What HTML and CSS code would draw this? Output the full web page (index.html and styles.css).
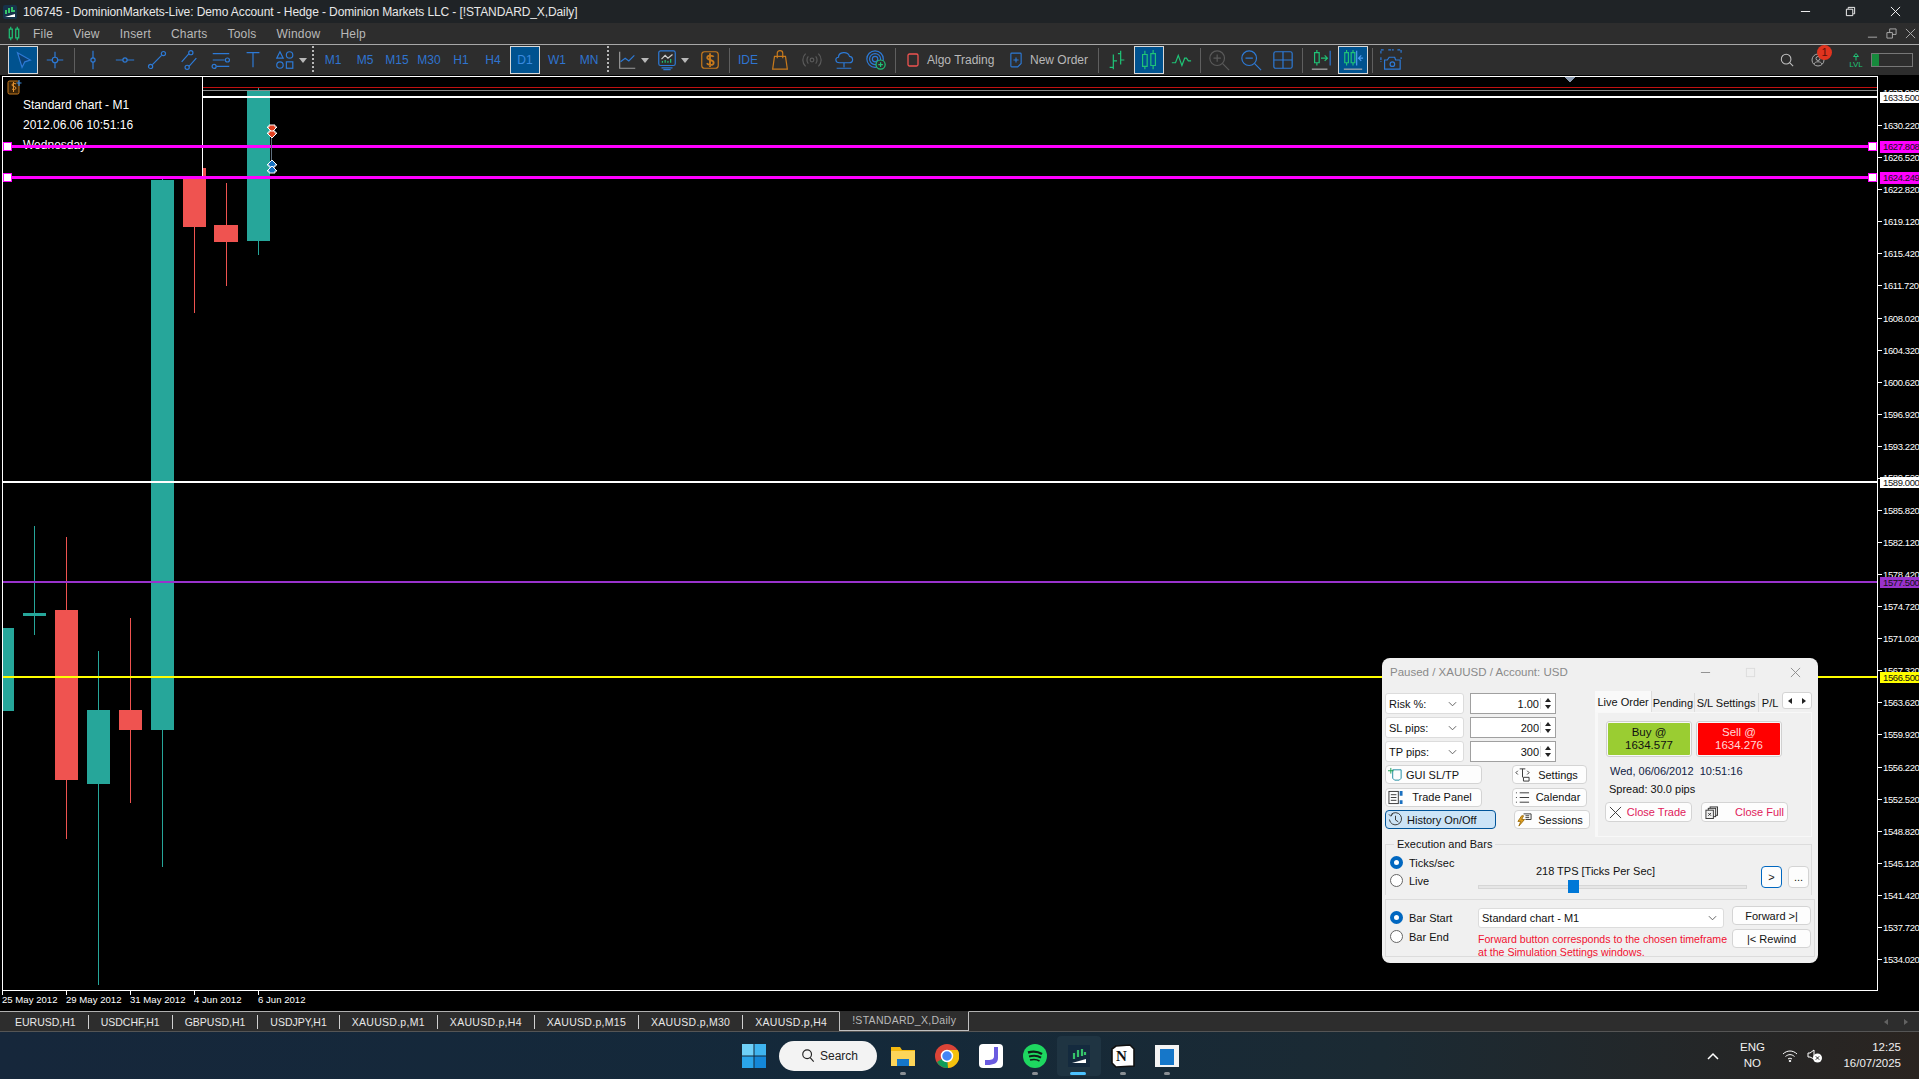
FILE: index.html
```html
<!DOCTYPE html>
<html lang="en">
<head>
    <meta charset="UTF-8">
    <title>DominionMarkets-Live: Demo Account</title>
    <link rel="stylesheet" href="styles.css">
</head>
<body>
    <!-- Window title -->
    <header class="titlebar">
        <svg class="app-icon" viewBox="0 0 14 14"><rect width="14" height="14" rx="2" fill="#17324a"/><path d="M2 12l10-3v3z" fill="#fff"/><path d="M3 9V5M6 8V3M9 7V2M11 7V5" stroke="#35c46a" stroke-width="2"/></svg>
        <span class="title-text">106745 - DominionMarkets-Live: Demo Account - Hedge - Dominion Markets LLC - [!STANDARD_X,Daily]</span>
        <div class="win-btns">
            <svg viewBox="0 0 12 12"><path d="M1 6h10" stroke="#fff"/></svg>
            <svg viewBox="0 0 12 12" fill="none" stroke="#fff"><path d="M1.5 3.5h7v7h-7zM3.5 3V1.5h7v7H9"/></svg>
            <svg viewBox="0 0 12 12"><path d="M1 1l10 10M11 1L1 11" stroke="#fff"/></svg>
        </div>
    </header>

    <!-- Menu -->
    <nav class="menubar">
        <svg class="menu-logo" viewBox="0 0 14 18" fill="none" stroke="#1fc477" stroke-width="1.4"><path d="M1.5 4h3.5v10H1.5zM9 4h3.5v10H9zM3.2 1v3M3.2 14v3M10.8 1v3M10.8 14v3"/></svg>
        <span class="menu-item">File</span>
        <span class="menu-item">View</span>
        <span class="menu-item">Insert</span>
        <span class="menu-item">Charts</span>
        <span class="menu-item">Tools</span>
        <span class="menu-item">Window</span>
        <span class="menu-item">Help</span>
        <div class="child-btns">
            <svg viewBox="0 0 12 12"><path d="M1 10h10" stroke="#b0b0b0"/></svg>
            <svg viewBox="0 0 12 12" fill="none" stroke="#b0b0b0"><path d="M1 5h6v6H1zM4 5V1h7v6H7"/></svg>
            <svg viewBox="0 0 12 12"><path d="M1 1l10 10M11 1L1 11" stroke="#b0b0b0"/></svg>
        </div>
    </nav>

    <!-- Toolbar -->
    <div class="toolbar">
        <span class="tool active"><svg viewBox="0 0 24 24" class="ico"><path d="M6 4l14 8-6 2-3 6z" fill="#0b3f70"/></svg></span>
        <span class="tool"><svg viewBox="0 0 24 24" class="ico"><path d="M12 3v18M3 12h18"/><circle cx="12" cy="12" r="3" fill="#2d2d2d"/></svg></span>
        <span class="sep"></span>
        <span class="tool"><svg viewBox="0 0 24 24" class="ico"><path d="M12 2v8M12 14v8"/><circle cx="12" cy="12" r="2.3"/></svg></span>
        <span class="tool"><svg viewBox="0 0 24 24" class="ico"><path d="M2 12h8M14 12h8"/><circle cx="12" cy="12" r="2.3"/></svg></span>
        <span class="tool"><svg viewBox="0 0 24 24" class="ico"><path d="M7 17L17 7"/><circle cx="5" cy="19" r="2.3"/><circle cx="19" cy="5" r="2.3"/></svg></span>
        <span class="tool"><svg viewBox="0 0 24 24" class="ico"><path d="M4 14L12 5M12 19l8-9"/><circle cx="14" cy="4" r="2.3"/><circle cx="10" cy="20" r="2.3"/></svg></span>
        <span class="tool"><svg viewBox="0 0 24 24" class="ico"><path d="M3 5h18M3 12h13M7 19h14"/><circle cx="19" cy="12" r="2.2"/><circle cx="4.500" cy="19" r="2.2"/></svg></span>
        <span class="tool"><svg viewBox="0 0 24 24" class="ico"><path d="M5 4h14M12 4v16"/></svg></span>
        <span class="tool"><svg viewBox="0 0 24 24" class="ico"><path d="M6.500 3L10 10H3z"/><circle cx="17" cy="6.500" r="3.500"/><circle cx="6.500" cy="17.500" r="3.500"/><rect x="13.500" y="14" width="7" height="7"/></svg></span>
        <span class="caret"></span>
        <span class="dots dots-a"></span>
        <span class="tool period">M1</span>
        <span class="tool period">M5</span>
        <span class="tool period">M15</span>
        <span class="tool period">M30</span>
        <span class="tool period">H1</span>
        <span class="tool period">H4</span>
        <span class="tool period active">D1</span>
        <span class="tool period">W1</span>
        <span class="tool period">MN</span>
        <span class="dots"></span>
        <span class="tool"><svg viewBox="0 0 24 24" class="ico grey"><path d="M4 3v18h17" stroke="#9a9a9a"/><path d="M5 14l5-4 4 3 6-6" stroke="#2d7ad6"/></svg></span>
        <span class="caret"></span>
        <span class="tool"><svg viewBox="0 0 24 24" class="ico"><rect x="3" y="2" width="18" height="16" rx="2"/><path d="M6 11l4-4 3 3 5-4" stroke="#cfcfcf"/><path d="M7 15v-2M10 15v-3M13 15v-2M16 15v-4" stroke="#1fc477"/><path d="M6 20.500h12M8 22.500h8"/></svg></span>
        <span class="caret"></span>
        <span class="tool money"><svg viewBox="0 0 24 24" class="ico orange"><rect x="3" y="3" width="18" height="18" rx="3"/><path d="M16 8.500c-1-1.500-7-2-7 1s7 2 7 5.500-6 2.500-7.500 .5M12 4.500v15" stroke-width="2"/></svg></span>
        <span class="sep"></span>
        <span class="tool period">IDE</span>
        <span class="tool"><svg viewBox="0 0 24 24" class="ico orange"><path d="M6 8h12l2 14H4zM9 10V4.500C9 1 15 1 15 4.500V10"/></svg></span>
        <span class="tool"><svg viewBox="0 0 24 24" class="ico dim"><circle cx="12" cy="12" r="2"/><path d="M8 8c-2 2-2 6 0 8M16 8c2 2 2 6 0 8M5 5c-4 4-4 10 0 14M19 5c4 4 4 10 0 14"/></svg></span>
        <span class="tool"><svg viewBox="0 0 24 24" class="ico"><path d="M7 15c-5 0-5-6-1-6 0-6 10-7 12-1 4 0 5 7 0 7zM12 15v5M4 21h16"/></svg></span>
        <span class="tool"><svg viewBox="0 0 24 24" class="ico"><circle cx="11" cy="11" r="9"/><circle cx="11" cy="11" r="6"/><circle cx="11" cy="11" r="3"/><circle cx="17" cy="17" r="5" fill="#2d2d2d" stroke="#1fc477"/><path d="M17 14.500v5M14.500 17h5" stroke="#1fc477"/></svg></span>
        <span class="sep"></span>
        <span class="tool-text algo"><svg viewBox="0 0 12 14" class="check"><rect x="1" y="1" width="10" height="12" rx="1.500" fill="none" stroke="#ef5350" stroke-width="1.300"/></svg>Algo Trading</span>
        <span class="tool-text order"><svg viewBox="0 0 14 18" class="check order-ico" fill="none" stroke="#2d7ad6" stroke-width="1.300"><path d="M2 1h10a1 1 0 0 1 1 1v11l-4 4H2a1 1 0 0 1-1-1V2a1 1 0 0 1 1-1zM7 6v6M4 9h6"/></svg>New Order</span>
        <span class="sep"></span>
        <span class="tool"><svg viewBox="0 0 24 24" class="ico green"><path d="M8 6v16M8 20H4M8 13h4M16 2v15M16 5h-3M16 12h4"/></svg></span>
        <span class="tool active"><svg viewBox="0 0 24 24" class="ico green"><path d="M5 6h5v13H5zM14 5h5v13h-5zM7.500 2v4M7.500 19v3M16.500 1v4M16.500 18v4"/></svg></span>
        <span class="tool"><svg viewBox="0 0 24 24" class="ico green"><path d="M2 15h4l3-8 4 11 3-8h2l2 3h3"/></svg></span>
        <span class="sep"></span>
        <span class="tool"><svg viewBox="0 0 24 24" class="ico dim"><circle cx="10" cy="10" r="8"/><path d="M16 16l7 7M6 10h8M10 6v8"/></svg></span>
        <span class="tool"><svg viewBox="0 0 24 24" class="ico"><circle cx="10" cy="10" r="8"/><path d="M16 16l7 7M6 10h8"/></svg></span>
        <span class="tool"><svg viewBox="0 0 24 24" class="ico"><rect x="2" y="3" width="20" height="18" rx="2"/><path d="M12 3v18M2 12h20"/></svg></span>
        <span class="sep"></span>
        <span class="tool"><svg viewBox="0 0 24 24" class="ico"><path d="M2 22h17" stroke="#b0b0b0"/><path d="M5 4h5v11H5zM7.500 1v3M7.500 15v3" stroke="#1fc477"/><path d="M22 2v16" /><path d="M12 10h7M16 7l3 3-3 3" stroke="#1fc477"/></svg></span>
        <span class="tool active"><svg viewBox="0 0 24 24" class="ico"><path d="M2 22h20" stroke="#b0b0b0"/><path d="M3 4h4v11H3zM10 4h4v11h-4zM5 1v3M5 15v3M12 1v3M12 15v3" stroke="#1fc477"/><path d="M16 2v16" stroke="#4d9df0"/><path d="M23 10h-5M21 7l-3 3 3 3" stroke="#4d9df0"/></svg></span>
        <span class="sep"></span>
        <span class="tool"><svg viewBox="0 0 24 24" class="ico"><path d="M1 5V1h4M9 1h6M19 1h4v4M1 9v5M23 9v2" stroke-dasharray="3 1"/><path d="M5 12h3l2-3h6l1 3h5v10H5z"/><circle cx="13.500" cy="16.500" r="2.500"/></svg></span>
        <div class="toolbar-right">
            <svg viewBox="0 0 16 16" class="search-ico" fill="none" stroke="#c0c0c0" stroke-width="1.200"><circle cx="7" cy="7" r="5.500"/><path d="M11 11l4 4"/></svg>
            <div class="account">
                <svg viewBox="0 0 14 14" fill="none" stroke="#aaa"><circle cx="7" cy="7" r="6"/><circle cx="7" cy="5.500" r="2"/><path d="M3 11c1-3 7-3 8 0"/></svg>
                <span class="badge">1</span>
            </div>
            <div class="lvl">
                <svg viewBox="0 0 10 8" fill="none" stroke="#1fc477"><path d="M5 8V4H2.500L5 1l2.500 3H5"/></svg>
                <span>LVL</span>
            </div>
            <div class="level-bar"><span class="level-fill"></span></div>
        </div>
    </div>

    <!-- Chart: drawn in page coordinates -->
    <main class="chart">
        <svg class="chart-svg" viewBox="0 75 1919 936" shape-rendering="crispEdges">
            <!-- candles -->
            <g class="up">
                <rect x="2" y="628" width="12" height="83"/>
                <rect x="34" y="526" width="1" height="109"/><rect x="23" y="613" width="23" height="3"/>
                <rect x="98" y="651" width="1" height="334"/><rect x="87" y="710" width="23" height="74"/>
                <rect x="162" y="179" width="1" height="688"/><rect x="151" y="180" width="23" height="550"/>
                <rect x="258" y="88" width="1" height="167"/><rect x="247" y="90" width="23" height="151"/>
            </g>
            <g class="down">
                <rect x="66" y="537" width="1" height="302"/><rect x="55" y="610" width="23" height="170"/>
                <rect x="130" y="618" width="1" height="185"/><rect x="119" y="710" width="23" height="20"/>
                <rect x="194" y="168" width="1" height="145"/><rect x="183" y="168" width="23" height="59"/>
                <rect x="226" y="183" width="1" height="103"/><rect x="214" y="225" width="24" height="17"/>
            </g>

            <!-- price levels behind the info box -->
            <rect x="203" y="87" width="1674" height="1" fill="#c01010"/>
            <rect x="203" y="90" width="1674" height="1" fill="#8a8a8a"/>
            <rect x="203" y="96" width="1674" height="2" fill="#fff"/>

            <!-- info box -->
            <rect x="2.500" y="76.500" width="200" height="100" fill="#000" stroke="#fff"/>
            <g class="info" shape-rendering="auto">
                <text x="23" y="109">Standard chart - M1</text>
                <text x="23" y="129">2012.06.06 10:51:16</text>
                <text x="23" y="149">Wednesday</text>
            </g>
            <g shape-rendering="auto">
                <rect x="8" y="81" width="11" height="13" rx="1.500" fill="#3a2408" stroke="#c87a1c"/>
                <path d="M16 84c-1-1-4-1-4 1s4 1 4 3-3 2-4 1M13.500 82v10" fill="none" stroke="#e09030"/>
                <path d="M19 80v6M16.500 83h5" stroke="#3c8de0" stroke-width="1.200"/>
            </g>

            <!-- horizontal lines -->
            <rect x="3" y="481" width="1874" height="2" fill="#fff"/>
            <rect x="3" y="581" width="1874" height="2" fill="#9932cc"/>
            <rect x="3" y="676" width="1874" height="2" fill="#ff0"/>
            <rect x="3" y="145" width="1874" height="3" fill="#f0f"/>
            <rect x="3" y="176" width="1874" height="3" fill="#f0f"/>
            <rect class="handle" x="3.500" y="142.500" width="8" height="8"/>
            <rect class="handle" x="3.500" y="173.500" width="8" height="8"/>
            <rect class="handle" x="1868.500" y="142.500" width="8" height="8"/>
            <rect class="handle" x="1868.500" y="173.500" width="8" height="8"/>

            <!-- trades -->
            <rect x="271" y="138" width="1" height="22" fill="#607080"/>
            <g shape-rendering="auto" stroke="#fff" stroke-width="1">
                <path d="M269 125h6v2h2l-5 5-5-5h2z" fill="#e04020"/>
                <path d="M269 131h6v2h2l-5 5-5-5h2z" fill="#e04020"/>
                <path d="M272 160l5 5h-2v2h-6v-2h-2z" fill="#1670c0"/>
                <path d="M272 166l5 5h-2v2h-6v-2h-2z" fill="#1670c0"/>
            </g>
            <path d="M1564 77h12l-6 5z" fill="#8a9ab0"/>

            <!-- frame -->
            <rect x="2" y="76" width="1876" height="1" fill="#fff"/>
            <rect x="2" y="76" width="1" height="915" fill="#fff"/>
            <rect x="1877" y="76" width="1" height="915" fill="#fff"/>
            <rect x="2" y="990" width="1876" height="1" fill="#fff"/>

            <!-- price axis -->
            <g fill="#fff">
                <rect x="1878" y="125" width="4" height="1"/><rect x="1878" y="157" width="4" height="1"/>
                <rect x="1878" y="189" width="4" height="1"/><rect x="1878" y="221" width="4" height="1"/>
                <rect x="1878" y="253" width="4" height="1"/><rect x="1878" y="285" width="4" height="1"/>
                <rect x="1878" y="318" width="4" height="1"/><rect x="1878" y="350" width="4" height="1"/>
                <rect x="1878" y="382" width="4" height="1"/><rect x="1878" y="414" width="4" height="1"/>
                <rect x="1878" y="446" width="4" height="1"/><rect x="1878" y="478" width="4" height="1"/>
                <rect x="1878" y="510" width="4" height="1"/><rect x="1878" y="542" width="4" height="1"/>
                <rect x="1878" y="574" width="4" height="1"/><rect x="1878" y="606" width="4" height="1"/>
                <rect x="1878" y="638" width="4" height="1"/><rect x="1878" y="670" width="4" height="1"/>
                <rect x="1878" y="702" width="4" height="1"/><rect x="1878" y="734" width="4" height="1"/>
                <rect x="1878" y="767" width="4" height="1"/><rect x="1878" y="799" width="4" height="1"/>
                <rect x="1878" y="831" width="4" height="1"/><rect x="1878" y="863" width="4" height="1"/>
                <rect x="1878" y="895" width="4" height="1"/><rect x="1878" y="927" width="4" height="1"/>
                <rect x="1878" y="959" width="4" height="1"/>
                <rect x="2" y="990" width="1" height="5"/><rect x="66" y="990" width="1" height="5"/>
                <rect x="130" y="990" width="1" height="5"/><rect x="194" y="990" width="1" height="5"/>
                <rect x="258" y="990" width="1" height="5"/>
            </g>
            <g class="axis" shape-rendering="auto">
                <text x="1883" y="96">1633.920</text>
                <text x="1883" y="129">1630.220</text>
                <text x="1883" y="161">1626.520</text>
                <text x="1883" y="193">1622.820</text>
                <text x="1883" y="225">1619.120</text>
                <text x="1883" y="257">1615.420</text>
                <text x="1883" y="289">1611.720</text>
                <text x="1883" y="322">1608.020</text>
                <text x="1883" y="354">1604.320</text>
                <text x="1883" y="386">1600.620</text>
                <text x="1883" y="418">1596.920</text>
                <text x="1883" y="450">1593.220</text>
                <text x="1883" y="481">1589.520</text>
                <text x="1883" y="514">1585.820</text>
                <text x="1883" y="546">1582.120</text>
                <text x="1883" y="578">1578.420</text>
                <text x="1883" y="610">1574.720</text>
                <text x="1883" y="642">1571.020</text>
                <text x="1883" y="674">1567.320</text>
                <text x="1883" y="706">1563.620</text>
                <text x="1883" y="738">1559.920</text>
                <text x="1883" y="771">1556.220</text>
                <text x="1883" y="803">1552.520</text>
                <text x="1883" y="835">1548.820</text>
                <text x="1883" y="867">1545.120</text>
                <text x="1883" y="899">1541.420</text>
                <text x="1883" y="931">1537.720</text>
                <text x="1883" y="963">1534.020</text>
            </g>
            <g class="times" shape-rendering="auto">
                <text x="2" y="1003">25 May 2012</text>
                <text x="66" y="1003">29 May 2012</text>
                <text x="130" y="1003">31 May 2012</text>
                <text x="194" y="1003">4 Jun 2012</text>
                <text x="258" y="1003">6 Jun 2012</text>
            </g>
            <!-- price tags -->
            <rect x="1880" y="92" width="39" height="11" fill="#fff"/>
            <rect x="1880" y="141" width="39" height="12" fill="#f0f"/>
            <rect x="1880" y="172" width="39" height="12" fill="#f0f"/>
            <rect x="1880" y="477" width="39" height="11" fill="#fff"/>
            <rect x="1880" y="577" width="39" height="11" fill="#9932cc"/>
            <rect x="1880" y="672" width="39" height="11" fill="#ff0"/>
            <g class="tag" shape-rendering="auto">
                <text x="1883" y="101">1633.500</text>
                <text x="1883" y="150">1627.808</text>
                <text x="1883" y="181">1624.249</text>
                <text x="1883" y="486">1589.000</text>
                <text x="1883" y="586">1577.500</text>
                <text x="1883" y="681">1566.500</text>
            </g>
        </svg>

        <!-- Floating simulator window -->
        <section class="sim-window">
            <div class="sim-title">
                <span>Paused / XAUUSD / Account: USD</span>
                <div class="sim-ctrl">
                    <svg viewBox="0 0 12 12"><path d="M1 6h10" stroke="#8a8a8a"/></svg>
                    <svg viewBox="0 0 12 12"><rect x="1.500" y="1.500" width="9" height="9" fill="none" stroke="#dcdcdc"/></svg>
                    <svg viewBox="0 0 12 12"><path d="M1 1l10 10M11 1L1 11" stroke="#8a8a8a"/></svg>
                </div>
            </div>
            <div class="sim-top">
                <div class="sim-left">
                    <div class="param">
                        <div class="combo">Risk %:<svg class="chev" viewBox="0 0 10 6"><path d="M1 1l4 4 4-4"/></svg></div>
                        <div class="spin"><span class="spin-val">1.00</span><span class="spin-arrows"><i class="up-arrow"></i><i class="dn-arrow"></i></span></div>
                    </div>
                    <div class="param">
                        <div class="combo">SL pips:<svg class="chev" viewBox="0 0 10 6"><path d="M1 1l4 4 4-4"/></svg></div>
                        <div class="spin"><span class="spin-val">200</span><span class="spin-arrows"><i class="up-arrow"></i><i class="dn-arrow"></i></span></div>
                    </div>
                    <div class="param">
                        <div class="combo">TP pips:<svg class="chev" viewBox="0 0 10 6"><path d="M1 1l4 4 4-4"/></svg></div>
                        <div class="spin"><span class="spin-val">300</span><span class="spin-arrows"><i class="up-arrow"></i><i class="dn-arrow"></i></span></div>
                    </div>
                    <div class="btn-grid">
                        <button class="btn w-left"><svg viewBox="0 0 16 16" class="btn-ico" fill="none" stroke="#1a8aa0"><path d="M5 3h9v9l-2 2H7l-2-2z"/><path d="M3 1v6M0 4h6" stroke="#1aa050"/></svg><span class="btn-label lbl-gui">GUI SL/TP</span></button>
                        <button class="btn w-right"><svg viewBox="0 0 16 16" class="btn-ico" fill="none" stroke="#333"><path d="M5 2h6M8 2v9M3 4L1 6l2 2M13 4l2 2-2 2M9 11h6v4H9z"/></svg><span class="btn-label">Settings</span></button>
                        <button class="btn w-left"><svg viewBox="0 0 16 16" class="btn-ico" fill="none" stroke="#333"><rect x="1" y="1.500" width="10" height="13"/><path d="M3 5h6M3 8h6M3 11h6"/><path d="M14 1v5M14 11v4" stroke="#1a70c0" stroke-width="3"/></svg><span class="btn-label">Trade Panel</span></button>
                        <button class="btn w-right"><svg viewBox="0 0 16 16" class="btn-ico" fill="none" stroke="#333"><path d="M5 3h10M5 8h10M5 13h10M1 3h1M1 8h1M1 13h1"/></svg><span class="btn-label">Calendar</span></button>
                        <button class="btn w-hist on"><svg viewBox="0 0 16 16" class="btn-ico" fill="none" stroke="#333"><path d="M3 3a6.500 6.500 0 1 1-1.500 5M1 2.500l2 2 2-2M8 4v4.500l3 2"/></svg><span class="btn-label lbl-hist">History On/Off</span></button>
                        <button class="btn w-sess"><svg viewBox="0 0 16 16" class="btn-ico" fill="none" stroke="#333"><path d="M7 2h8v6H9M9 4h4M9 6h4"/><path d="M5 4L1 10h3l-2 5 6-7H5l2-4z" fill="#e0a020" stroke="#a07010"/></svg><span class="btn-label">Sessions</span></button>
                    </div>
                </div>
                <div class="sim-right">
                    <div class="tabs">
                        <span class="tab current">Live Order</span>
                        <span class="tab t-pending">Pending</span>
                        <span class="tab t-sl">S/L Settings</span>
                        <span class="tab t-pl">P/L</span>
                        <span class="tab-arrows"><i class="lt"></i><i class="rt"></i></span>
                    </div>
                    <div class="tab-body">
                        <div class="trade-row">
                            <div class="trade buy">Buy @<br>1634.577</div>
                            <div class="trade sell">Sell @<br>1634.276</div>
                        </div>
                        <p class="clock">Wed, 06/06/2012&nbsp; 10:51:16</p>
                        <p class="spread">Spread: 30.0 pips</p>
                        <div class="close-row">
                            <button class="btn close-btn"><svg viewBox="0 0 14 14" class="x-ico"><path d="M1 1l12 12M13 1L1 13" stroke="#333" fill="none"/></svg><span class="close-label">Close Trade</span></button>
                            <button class="btn close-btn full"><svg viewBox="0 0 14 14" class="x-ico" fill="#f0f0f0" stroke="#333"><rect x="5.500" y="1" width="8" height="9"/><rect x="3.500" y="2.500" width="8" height="9"/><rect x="1" y="4.500" width="8" height="9"/><path d="M3.500 7.500l3 3M6.500 7.500l-3 3"/></svg><span class="close-label">Close Full</span></button>
                        </div>
                    </div>
                </div>
            </div>

            <fieldset class="exec">
                <legend>Execution and Bars</legend>
                <div class="radio-col">
                    <label class="radio-row"><i class="radio checked"></i>Ticks/sec</label>
                    <label class="radio-row"><i class="radio"></i>Live</label>
                </div>
                <div class="speed">
                    <span class="speed-label">218 TPS [Ticks Per Sec]</span>
                    <div class="track"><span class="thumb"></span></div>
                </div>
                <button class="btn small focus">&gt;</button>
                <button class="btn small">...</button>
            </fieldset>

            <div class="bars">
                <div class="radio-col bar-radios">
                    <label class="radio-row"><i class="radio checked"></i>Bar Start</label>
                    <label class="radio-row"><i class="radio"></i>Bar End</label>
                </div>
                <div class="bars-mid">
                    <div class="combo wide">Standard chart - M1<svg class="chev" viewBox="0 0 10 6"><path d="M1 1l4 4 4-4"/></svg></div>
                    <p class="warn">Forward button corresponds to the chosen timeframe<br>at the Simulation Settings windows.</p>
                </div>
                <div class="bars-btns">
                    <button class="btn">Forward &gt;|</button>
                    <button class="btn">|&lt; Rewind</button>
                </div>
            </div>
        </section>
    </main>

    <!-- Chart tabs -->
    <div class="chart-tabs">
        <span class="ctab">EURUSD,H1</span>
        <span class="ctab">USDCHF,H1</span>
        <span class="ctab">GBPUSD,H1</span>
        <span class="ctab">USDJPY,H1</span>
        <span class="ctab xau">XAUUSD.p,M1</span>
        <span class="ctab xau">XAUUSD.p,H4</span>
        <span class="ctab xau">XAUUSD.p,M15</span>
        <span class="ctab xau">XAUUSD.p,M30</span>
        <span class="ctab xau last">XAUUSD.p,H4</span>
        <span class="ctab selected">!STANDARD_X,Daily</span>
        <div class="ctab-arrows"><i class="lt"></i><i class="rt"></i></div>
    </div>

    <!-- Windows taskbar -->
    <footer class="taskbar">
        <div class="task-apps">
            <span class="task-icon start"><svg viewBox="0 0 24 24"><rect x="0" y="0" width="11.500" height="11.500" fill="#6fd0f8"/><rect x="12.500" y="0" width="11.500" height="11.500" fill="#3fb4ef"/><rect x="0" y="12.500" width="11.500" height="11.500" fill="#2aa5ea"/><rect x="12.500" y="12.500" width="11.500" height="11.500" fill="#1487d8"/></svg></span>
            <div class="search-pill">
                <svg viewBox="0 0 16 16" fill="none" stroke="#222" stroke-width="1.300"><circle cx="7" cy="6.500" r="5"/><path d="M10.500 10.500l4 4.500"/></svg>
                <span>Search</span>
            </div>
            <span class="task-icon running"><svg viewBox="0 0 24 24"><path d="M0 3h9l2 3h13v16H0z" fill="#f5b90f"/><path d="M0 7h24v15H0z" fill="#fdd559"/><path d="M6 15h12v7H6z" fill="#1677c9"/></svg></span>
            <span class="task-icon"><svg viewBox="0 0 24 24"><circle cx="12" cy="12" r="12" fill="#db4437"/><path d="M12 12L2 18a12 12 0 0 0 11 6z" fill="#0f9d58"/><path d="M12 6h10.700A12 12 0 0 1 13 24z" fill="#f4c20d"/><circle cx="12" cy="12" r="5.500" fill="#4285f4" stroke="#fff" stroke-width="1.500"/></svg></span>
            <span class="task-icon"><svg viewBox="0 0 24 24"><rect width="24" height="24" rx="4" fill="#fff"/><path d="M15 3h4v11c0 5-4 7-11 7H6v-5h3c4 0 6-1 6-4z" fill="#6a5be0"/></svg></span>
            <span class="task-icon running"><svg viewBox="0 0 24 24" fill="none" stroke="#102018"><circle cx="12" cy="12" r="12" fill="#1ed760" stroke="none"/><path d="M5 8.500c5-1.500 10-1 14 1.500" stroke-width="2.400"/><path d="M6 12.500c4-1 9-.8 12 1.200" stroke-width="2"/><path d="M7 16c3-.8 7-.6 9.500 1" stroke-width="1.600"/></svg></span>
            <span class="task-icon selected-app"><svg viewBox="0 0 24 24"><rect x="1" y="1" width="22" height="22" fill="#142a3e"/><path d="M5 19l14-4v4z" fill="#fff"/><path d="M7 15V9M11 13V6M15 12V5M18 11V8" stroke="#35c46a" stroke-width="2.200"/></svg></span>
            <span class="task-icon running"><svg viewBox="0 0 24 24"><path d="M5 2l14-1 4 4v17l-18 1-4-4V5z" fill="#fff" stroke="#111" stroke-width="1.600"/></svg><b class="notion-n">N</b></span>
            <span class="task-icon running"><svg viewBox="0 0 24 24"><rect y="1" width="24" height="22" fill="#f4f4f4"/><rect x="5" y="5" width="14" height="16" fill="#1677c9"/></svg></span>
        </div>
        <div class="tray">
            <svg class="tray-caret" viewBox="0 0 12 8" fill="none" stroke="#fff" stroke-width="1.500"><path d="M1 7l5-5 5 5"/></svg>
            <div class="lang"><span>ENG</span><span>NO</span></div>
            <svg class="tray-wifi" viewBox="0 0 16 12" fill="none" stroke="#fff"><path d="M1 4c4-4 10-4 14 0M3.500 6.500c3-2.500 6-2.500 9 0M6 9c1.500-1 2.500-1 4 0"/><circle cx="8" cy="11" r=".8" fill="#fff"/></svg>
            <svg class="tray-sound" viewBox="0 0 16 14"><path d="M1 4h2l4-3v9L3 8H1z" fill="none" stroke="#fff"/><circle cx="10.500" cy="9" r="4.500" fill="#fff"/><path d="M8.800 7.300l3.400 3.400M12.200 7.300l-3.400 3.400" stroke="#222"/></svg>
            <div class="clock-box"><span>12:25</span><span>16/07/2025</span></div>
        </div>
    </footer>
</body>
</html>
```

FILE: styles.css
```css
* {
    margin: 0;
    padding: 0;
    box-sizing: border-box;
}

body {
    width: 1919px;
    height: 1079px;
    overflow: hidden;
    display: flex;
    flex-direction: column;
    font-family: "Liberation Sans", Arial, sans-serif;
    background: #000;
    color: #fff;
}

/* Title bar */
.titlebar {
    height: 23px;
    flex: none;
    display: flex;
    align-items: center;
    padding-left: 3px;
    background: #1f2326;
    font-size: 12px;
    color: #e8e8e8;
}

.app-icon {
    width: 14px;
    height: 14px;
    margin-right: 6px;
}

.title-text {
    letter-spacing: -0.1px;
}

.win-btns {
    margin-left: auto;
    display: flex;
    align-items: center;
    gap: 34px;
    padding-right: 18px;
}

.win-btns svg {
    width: 11px;
    height: 11px;
}

/* Menu */
.menubar {
    height: 21px;
    flex: none;
    display: flex;
    align-items: center;
    padding-left: 8px;
    background: #2d2d2d;
    font-size: 12px;
    letter-spacing: 0.2px;
    color: #b9b9b9;
}

.menu-logo {
    width: 12px;
    height: 17px;
    margin-right: 3px;
}

.menu-item {
    padding: 0 10px;
}

.child-btns {
    margin-left: auto;
    display: flex;
    gap: 8px;
    padding-right: 3px;
}

.child-btns svg {
    width: 11px;
    height: 11px;
}

/* Toolbar */
.toolbar {
    height: 31px;
    flex: none;
    display: flex;
    align-items: center;
    padding-left: 7px;
    border-top: 1px solid #a8a8a8;
    background: #2d2d2d;
}

.tool {
    width: 32px;
    height: 28px;
    flex: none;
    display: flex;
    align-items: center;
    justify-content: center;
    border: 1px solid transparent;
    font-size: 12px;
}

.tool.active {
    background: #00528f;
    border-color: #d8d8d8;
    width: 30px;
    margin: 0 1px;
}

.period {
    color: #2f74d0;
}

.period.active {
    color: #3b8be0;
}

.ico {
    width: 22px;
    height: 22px;
    fill: none;
    stroke: #2d7ad6;
    stroke-width: 1.300;
}

.ico.orange {
    stroke: #c87a1c;
}

.ico.green {
    stroke: #1fc477;
}

.ico.dim {
    stroke: #5a5a5a;
}

.money {
    margin-left: 3px;
}

.caret {
    width: 8px;
    flex: none;
    height: 0;
    margin: 0 2px 0 -2px;
    border-left: 4px solid transparent;
    border-right: 4px solid transparent;
    border-top: 5px solid #b8b8b8;
}

.sep {
    width: 6px;
    height: 25px;
    flex: none;
    background: linear-gradient(#5f5f5f, #5f5f5f) center / 1px 100% no-repeat;
}

.dots {
    width: 6px;
    height: 28px;
    flex: none;
    background: repeating-linear-gradient(#b8b8b8 0 2px, transparent 2px 4px) center / 2px 100% no-repeat;
}

.dots-a {
    width: 8px;
}

.tool-text {
    height: 28px;
    flex: none;
    display: flex;
    align-items: center;
    font-size: 12px;
    color: #b9b9b9;
}

.check {
    width: 12px;
    height: 14px;
}

.algo {
    width: 103px;
    padding-left: 9px;
    gap: 8px;
}

.order {
    width: 94px;
    padding-left: 9px;
    gap: 8px;
}

.order-ico {
    height: 18px;
}

.toolbar-right {
    margin-left: auto;
    display: flex;
    align-items: center;
    padding-right: 6px;
}

.search-ico {
    width: 14px;
    height: 14px;
}

.account {
    position: relative;
    width: 14px;
    height: 14px;
    margin-left: 17px;
    display: flex;
}

.badge {
    position: absolute;
    top: -8px;
    left: 6px;
    width: 15px;
    height: 15px;
    border-radius: 50%;
    background: #e0341f;
    color: #5a1008;
    font-size: 11px;
    line-height: 15px;
    text-align: center;
}

.lvl {
    margin-left: 24px;
    width: 14px;
    display: flex;
    flex-direction: column;
    align-items: center;
    font-size: 8px;
    line-height: 8px;
    color: #1fc477;
}

.lvl svg {
    width: 10px;
    height: 9px;
}

.level-bar {
    width: 42px;
    height: 14px;
    margin-left: 8px;
    border: 1px solid #777;
    display: flex;
}

.level-fill {
    width: 7px;
    background: #178a3c;
}

/* Chart */
.chart {
    position: relative;
    flex: 1;
    min-height: 0;
    background: #000;
}

.chart-svg {
    display: block;
    width: 100%;
    height: 100%;
}

.up {
    fill: #26a69a;
}

.down {
    fill: #ef5350;
}

.info text {
    font-size: 12px;
    fill: #fff;
}

.axis text {
    font-size: 9.500px;
    letter-spacing: -0.4px;
    fill: #fff;
}

.times text {
    font-size: 9.600px;
    fill: #fff;
}

.tag text {
    font-size: 9.500px;
    letter-spacing: -0.4px;
    fill: #111;
}

.handle {
    fill: #fff;
    stroke: #f0f;
}

/* Simulator window */
.sim-window {
    position: absolute;
    left: 1382px;
    top: 583px;
    width: 436px;
    height: 305px;
    padding: 0 3px;
    border-radius: 8px;
    background: #f0f0f0;
    color: #111;
    font-size: 11px;
}

.sim-title {
    height: 33px;
    display: flex;
    align-items: center;
    padding: 0 0 5px 5px;
    font-size: 11.500px;
    color: #8a8a8a;
}

.sim-ctrl {
    margin-left: auto;
    display: flex;
    gap: 34px;
    padding-right: 14px;
}

.sim-ctrl svg {
    width: 11px;
    height: 11px;
}

.sim-top {
    display: flex;
    height: 146px;
}

.sim-left {
    width: 210px;
    padding-top: 2px;
}

.param {
    display: flex;
    gap: 6px;
    height: 21px;
    margin-bottom: 3px;
}

.combo {
    width: 79px;
    display: flex;
    align-items: center;
    justify-content: space-between;
    padding: 0 6px 0 3px;
    border: 1px solid #dcdcdc;
    border-radius: 3px;
    background: #fff;
}

.combo.wide {
    width: 246px;
    height: 20px;
}

.chev {
    width: 9px;
    height: 6px;
    fill: none;
    stroke: #555;
}

.spin {
    width: 86px;
    display: flex;
    align-items: center;
    justify-content: flex-end;
    border: 1px solid #a0a0a0;
    background: #fff;
}

.spin-arrows {
    display: flex;
    flex-direction: column;
    gap: 3px;
    width: 15px;
    align-items: center;
    margin-left: 1px;
    border-left: 1px solid #ddd;
}

.up-arrow, .dn-arrow {
    width: 0;
    height: 0;
    border-left: 3px solid transparent;
    border-right: 3px solid transparent;
}

.up-arrow {
    border-bottom: 4px solid #222;
}

.dn-arrow {
    border-top: 4px solid #222;
}

.btn-grid {
    display: grid;
    grid-template-columns: 127px 1fr;
    grid-auto-rows: 19px;
    row-gap: 3.500px;
    margin-top: 3px;
}

.btn {
    display: flex;
    align-items: center;
    justify-content: center;
    border: 1px solid #d4d4d4;
    border-radius: 4px;
    background: #fdfdfd;
    color: #111;
    font: inherit;
}

.btn-grid .btn {
    justify-content: flex-start;
    padding-left: 2px;
}

.btn-label {
    flex: 1;
    text-align: center;
}

.lbl-gui {
    text-align: left;
    padding-left: 3px;
}

.lbl-hist {
    text-align: left;
    padding-left: 4px;
}

.btn-ico {
    width: 15px;
    height: 15px;
    flex: none;
}

.w-left {
    width: 97px;
}

.w-right {
    width: 75px;
}

.w-hist {
    width: 111px;
}

.w-sess {
    width: 76px;
    margin-left: 2px;
}

.btn.on {
    background: #cce4f7;
    border-color: #005499;
}

.sim-right {
    width: 217px;
}

.tabs {
    display: flex;
    align-items: flex-end;
    height: 21px;
    position: relative;
}

.tab {
    height: 19px;
    display: flex;
    align-items: center;
    justify-content: center;
    border-right: 1px solid #dcdcdc;
}

.tab.current {
    width: 58px;
    height: 21px;
    background: #f9f9f9;
}

.t-pending {
    width: 43px;
}

.t-sl {
    width: 65px;
}

.t-pl {
    width: 23px;
    border-right: 0;
}

.tab-arrows {
    width: 30px;
    height: 17px;
    margin: 0 0 3px 1px;
    display: flex;
    align-items: center;
    justify-content: space-around;
    border: 1px solid #d4d4d4;
    border-radius: 3px;
    background: #fff;
}

.lt, .rt {
    width: 0;
    height: 0;
    border-top: 3.500px solid transparent;
    border-bottom: 3.500px solid transparent;
}

.lt {
    border-right: 4px solid #222;
}

.rt {
    border-left: 4px solid #222;
}

.tab-body {
    height: 125px;
    border: 1px solid #f8f8f8;
    border-left-width: 3px;
    padding: 8px 0 0 8px;
}

.trade-row {
    display: flex;
    gap: 4px;
}

.trade {
    width: 86px;
    height: 36px;
    border: 2px solid #f8f8f8;
    outline: 1px solid #d0d0d0;
    outline-offset: -1px;
    text-align: center;
    font-size: 11.500px;
    line-height: 13px;
    padding-top: 3px;
    border-radius: 3px;
}

.buy {
    background: #9acd32;
}

.sell {
    background: #f00;
    color: #ffd8d8;
}

.clock {
    margin: 8px 0 0 4px;
    color: #112244;
    line-height: 13px;
}

.spread {
    margin: 5px 0 0 3px;
    line-height: 13px;
}

.close-row {
    display: flex;
    gap: 9px;
    margin-top: 6px;
    margin-left: -1px;
}

.close-btn {
    width: 87px;
    height: 20px;
    justify-content: flex-start;
    padding-left: 3px;
}

.x-ico {
    width: 13px;
    height: 13px;
    flex: none;
}

.close-label {
    flex: 1;
    text-align: center;
    color: #e0205a;
}

.full .close-label {
    padding-left: 14px;
}

.exec {
    display: flex;
    height: 57px;
    margin-top: 1px;
    border: 1px solid #dcdcdc;
    border-bottom: 0;
    width: 427px;
}

.exec legend {
    margin-left: 8px;
    padding: 0 3px;
    line-height: 13px;
}

.radio-col {
    width: 92px;
    padding: 5px 0 0 4px;
    display: flex;
    flex-direction: column;
    gap: 5px;
}

.radio-row {
    display: flex;
    align-items: center;
    gap: 6px;
    height: 13px;
}

.radio {
    width: 13px;
    height: 13px;
    border: 1px solid #666;
    border-radius: 50%;
    background: #fff;
    flex: none;
}

.radio.checked {
    border: 4px solid #0067c0;
}

.speed {
    width: 269px;
    padding-top: 14px;
    text-align: center;
}

.speed-label {
    display: block;
    line-height: 13px;
    padding-right: 34px;
}

.track {
    position: relative;
    height: 4px;
    margin-top: 7px;
    background: #e6e6e6;
    border: 1px solid #d6d6d6;
}

.thumb {
    position: absolute;
    left: 89px;
    top: -6px;
    width: 11px;
    height: 13px;
    background: #0078d7;
}

.btn.small {
    width: 21px;
    height: 22px;
    flex: none;
    margin: 15px 0 0 14px;
}

.btn.small + .btn.small {
    margin-left: 6px;
}

.btn.focus {
    border: 1px solid #0067c0;
}

.bars {
    display: flex;
    width: 430px;
    height: 58px;
    margin-top: 4px;
    border: 1px solid #dcdcdc;
}

.bar-radios {
    padding-top: 11px;
    gap: 6px;
}

.bars-mid {
    width: 246px;
    padding-top: 8px;
}

.warn {
    margin-top: 5px;
    color: #f01030;
    font-size: 10.600px;
    line-height: 13px;
    white-space: nowrap;
}

.bars-btns {
    width: 79px;
    margin: 6px 0 0 8px;
    display: flex;
    flex-direction: column;
    gap: 4px;
}

.bars-btns .btn {
    height: 19px;
}

/* Chart tabs */
.chart-tabs {
    height: 21px;
    flex: none;
    display: flex;
    align-items: center;
    padding-left: 3px;
    background: #2d2d2d;
    border-top: 1px solid #b0b0b0;
    border-bottom: 1px solid #555;
    font-size: 10.500px;
    color: #e8e8e8;
}

.ctab {
    padding: 0 12px;
    line-height: 14px;
    border-right: 1px solid #d0d0d0;
}

.ctab.xau {
    letter-spacing: 0.28px;
}

.ctab.last {
    border-right: 0;
}

.ctab.selected {
    height: 20px;
    line-height: 17px;
    margin-top: -1px;
    letter-spacing: 0.3px;
    border: 1px solid #c0c0c0;
    border-top-color: #2d2d2d;
    color: #b9b9b9;
}

.ctab-arrows {
    margin-left: auto;
    display: flex;
    gap: 16px;
    padding-right: 11px;
    opacity: 0.25;
}

.ctab-arrows .lt {
    border-right-color: #fff;
}

.ctab-arrows .rt {
    border-left-color: #fff;
}

/* Taskbar */
.taskbar {
    height: 47px;
    flex: none;
    display: flex;
    align-items: center;
    padding-left: 732px;
    background: linear-gradient(90deg, #16273b 0%, #14293a 45%, #1b2a33 72%, #2a2420 100%);
}

.task-apps {
    display: flex;
    align-items: center;
}

.task-icon {
    position: relative;
    width: 44px;
    height: 40px;
    display: flex;
    align-items: center;
    justify-content: center;
    flex: none;
}

.task-icon svg {
    width: 24px;
    height: 24px;
}

.task-icon.start {
    margin-right: 3px;
}

.running::after, .selected-app::after {
    content: "";
    position: absolute;
    bottom: 1px;
    left: 19px;
    width: 6px;
    height: 3px;
    border-radius: 2px;
    background: #8a8f94;
}

.selected-app {
    background: #1f3442;
    border-radius: 4px;
}

.selected-app::after {
    left: 13px;
    width: 16px;
    background: #4cc2ff;
}

.notion-n {
    position: absolute;
    left: 15px;
    top: 12px;
    font: bold 15px "Liberation Serif", serif;
    color: #111;
}

.search-pill {
    width: 98px;
    height: 30px;
    margin-right: 4px;
    display: flex;
    align-items: center;
    gap: 5px;
    padding-left: 22px;
    border-radius: 15px;
    background: #f3f3f3;
    color: #222;
    font-size: 12px;
}

.search-pill svg {
    width: 14px;
    height: 15px;
    flex: none;
}

.tray {
    margin-left: auto;
    display: flex;
    align-items: center;
    padding-right: 18px;
    color: #f0f0f0;
    font-size: 11.500px;
}

.tray-caret {
    width: 12px;
    height: 8px;
    margin-right: 20px;
}

.lang {
    display: flex;
    flex-direction: column;
    align-items: center;
    gap: 3px;
    line-height: 13px;
    width: 26px;
}

.tray-wifi {
    width: 16px;
    height: 12px;
    margin-left: 17px;
}

.tray-sound {
    width: 16px;
    height: 14px;
    margin-left: 9px;
}

.clock-box {
    margin-left: 20px;
    display: flex;
    flex-direction: column;
    align-items: flex-end;
    gap: 3px;
    line-height: 13px;
}
```
